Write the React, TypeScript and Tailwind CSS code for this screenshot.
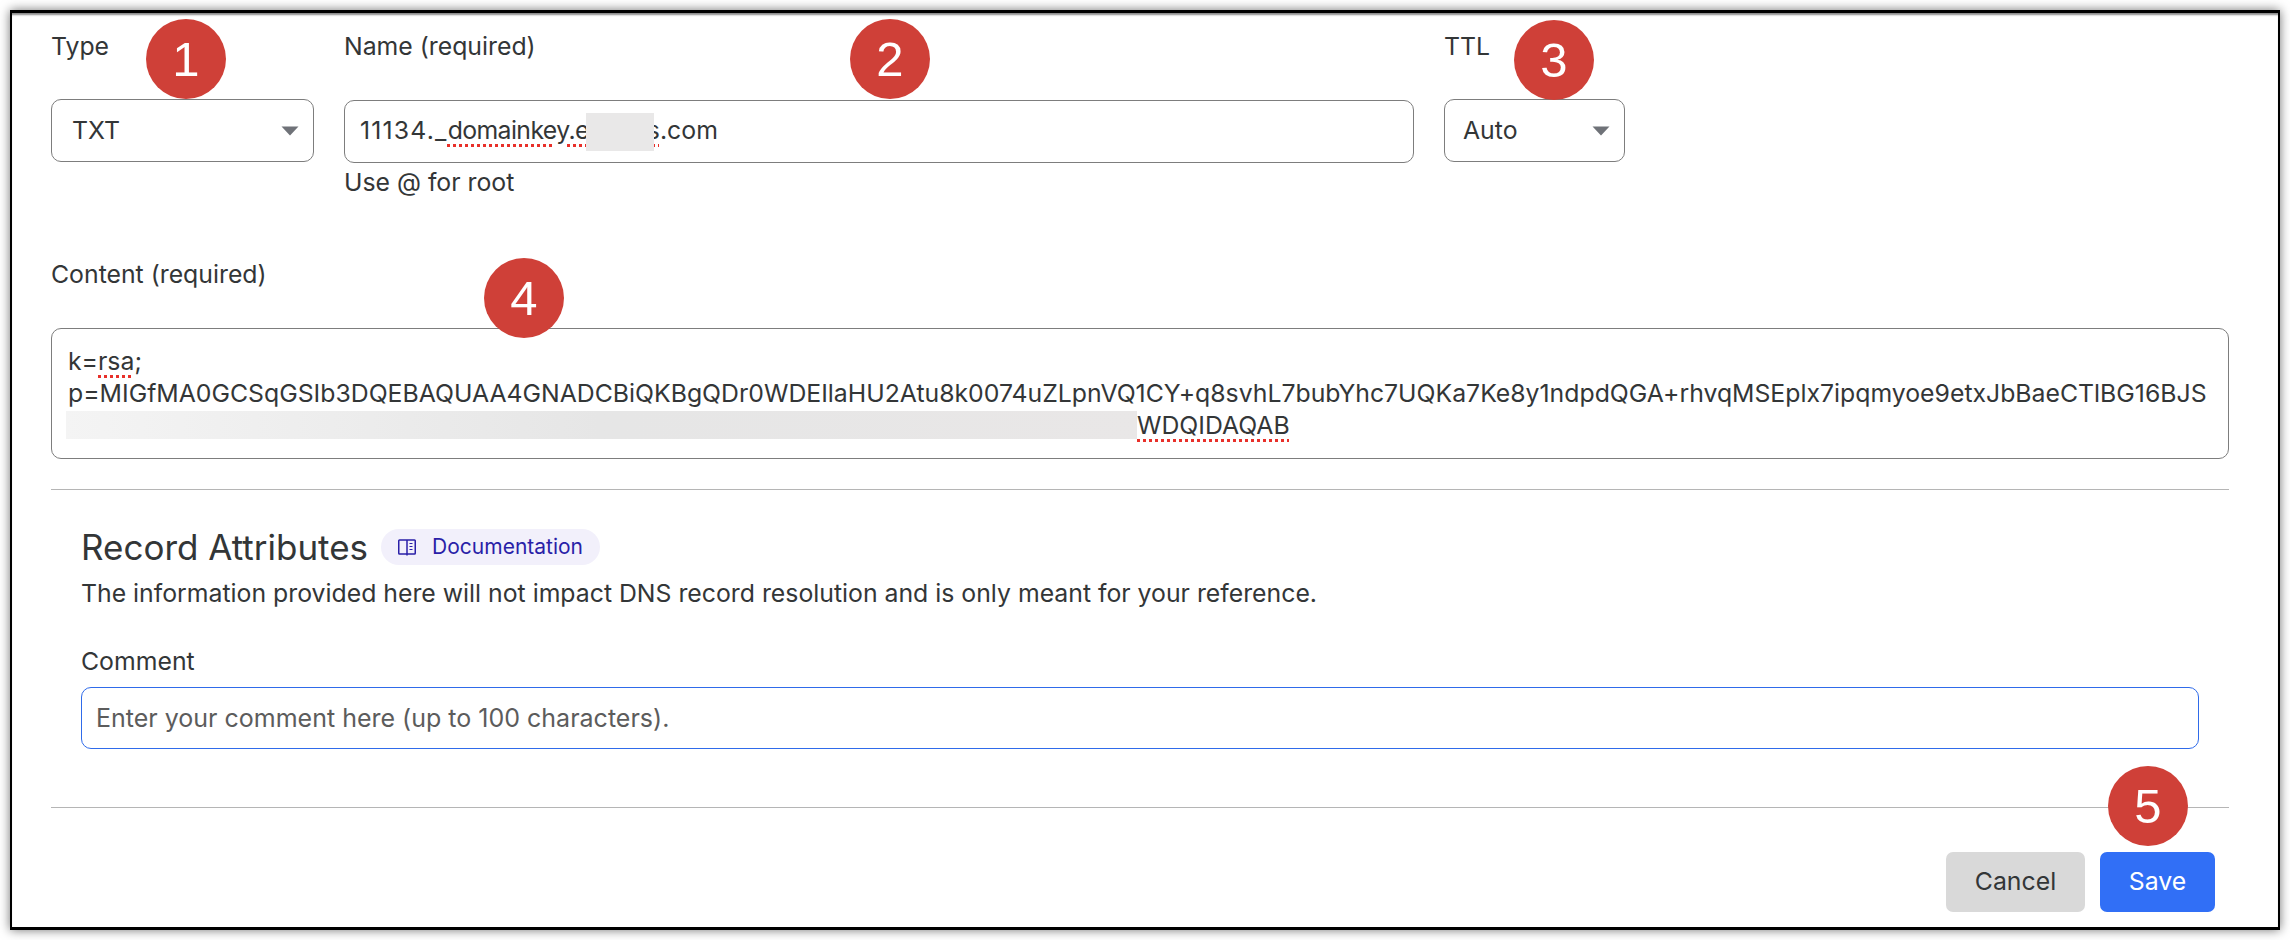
function Caret() {
  return (
    <svg width="18" height="10" viewBox="0 0 18 10" className="shrink-0">
      <path d="M0.5 0.5h17L9 9.5z" fill="#6f7278" />
    </svg>
  )
}

function BookIcon() {
  return (
    <svg width="18" height="20" viewBox="0 0 18 20" fill="none" stroke="currentColor" strokeWidth="1.5" className="shrink-0">
      <path d="M9 3H1.5a.75.75 0 0 0-.75.75v12.5c0 .4.35.75.75.75H9" />
      <path d="M9 3h7.5a.75.75 0 0 1 .75.75v12.5c0 .4-.35.75-.75.75H9" />
      <path d="M9 3v15.5" />
      <path d="M11.5 6.5h3M11.5 9.5h3M11.5 12.5h3" strokeWidth="1.2" />
    </svg>
  )
}

function Step({ n, className }: { n: number; className: string }) {
  return (
    <div
      className={`absolute w-[80px] h-[80px] rounded-full bg-[#cf4038] text-white flex items-center justify-center font-['Liberation_Sans',sans-serif] text-[49px] leading-none ${className}`}
    >
      {n}
    </div>
  )
}

function Squiggle({ children }: { children: React.ReactNode }) {
  return (
    <span className="underline decoration-dotted decoration-[#e8302a] decoration-[3px] underline-offset-[5px]">
      {children}
    </span>
  )
}

export default function App() {
  return (
    <div className="w-[2290px] h-[940px] bg-white p-[10px] font-['Inter',sans-serif] text-[24.8px] text-[#333637] overflow-hidden">
      <div className="relative w-[2270px] h-[920px] bg-white border-t-[3px] border-x-[2px] border-b-[3px] border-black shadow-[0_0_10px_rgba(0,0,0,0.55),inset_0_3px_2px_-1px_#8a8a8a] pl-[39px] pr-[49px]">
        <div className="flex gap-[30px] pt-[20px]">
          <div className="w-[263px]">
            <div className="h-[66px] leading-[26px]">Type</div>
            <div className="h-[63px] border border-[#7d7d7d] rounded-[10px] flex items-center justify-between pl-[20px] pr-[14px]">
              <span>TXT</span>
              <Caret />
            </div>
          </div>
          <div className="w-[1070px]">
            <div className="h-[67px] leading-[26px]">Name (required)</div>
            <div className="h-[63px] border border-[#7d7d7d] rounded-[10px] flex items-center pl-[15px]">
              <span className="whitespace-pre">
                <span className="tracking-[1.2px]">11134._</span>
                <span className="tracking-[-0.6px]">
                  <Squiggle>domainkey.e</Squiggle>
                </span>
                <span className="relative inline-block w-[68px] h-[38px] -ml-[3px] -mr-[7px] align-middle bg-[#e9e8e8]" />
                <Squiggle>s</Squiggle>.com
              </span>
            </div>
            <div className="mt-[6px] leading-[26px]">Use @ for root</div>
          </div>
          <div className="w-[181px]">
            <div className="h-[66px] leading-[26px]">TTL</div>
            <div className="h-[63px] border border-[#7d7d7d] rounded-[10px] flex items-center justify-between pl-[18px] pr-[14px]">
              <span>Auto</span>
              <Caret />
            </div>
          </div>
        </div>

        <div className="mt-[66px] h-[67px] leading-[26px]">Content (required)</div>
        <div className="h-[131px] border border-[#7d7d7d] rounded-[10px] pl-[16px] pt-[16px] leading-[32px] whitespace-nowrap">
          <div>
            k=<Squiggle>rsa</Squiggle>;
          </div>
          <div>p=MIGfMA0GCSqGSIb3DQEBAQUAA4GNADCBiQKBgQDr0WDEIlaHU2Atu8k0074uZLpnVQ1CY+q8svhL7bubYhc7UQKa7Ke8y1ndpdQGA+rhvqMSEplx7ipqmyoe9etxJbBaeCTlBG16BJS</div>
          <div className="flex items-center">
            <span className="w-[1071px] h-[28px] -ml-[2px] bg-gradient-to-r from-[#f4f4f4] via-[#e6e6e6] to-[#e9e7e7]" />
            <Squiggle>WDQIDAQAB</Squiggle>
          </div>
        </div>

        <div className="mt-[30px] border-t border-[#b5b5b5] px-[30px]">
          <div className="flex items-center gap-[13px] mt-[37px]">
            <h2 className="text-[35px] leading-[40px]">Record Attributes</h2>
            <a className="h-[36px] px-[17px] rounded-full bg-[#f2f0fb] text-[#2a1fa8] text-[21px] flex items-center gap-[16px]">
              <BookIcon />
              Documentation
            </a>
          </div>
          <p className="mt-[10px] leading-[32px]">
            The information provided here will not impact DNS record resolution and is only meant for your reference.
          </p>
          <div className="mt-[39px] leading-[26px]">Comment</div>
          <input
            className="mt-[13px] w-full h-[62px] border-[1.5px] border-[#2f6bea] rounded-[10px] px-[14px] text-[25px] outline-none placeholder:text-[#5c5c5c]"
            placeholder="Enter your comment here (up to 100 characters)."
          />
        </div>

        <div className="mt-[58px] border-t border-[#b5b5b5] flex justify-end gap-[15px] pt-[44px] pr-[14px]">
          <button className="w-[139px] h-[60px] rounded-[7px] bg-[#d9d9d9]">Cancel</button>
          <button className="w-[115px] h-[60px] rounded-[7px] bg-[#316ff6] text-white">Save</button>
        </div>

        <Step n={1} className="left-[134px] top-[6px]" />
        <Step n={2} className="left-[838px] top-[6px]" />
        <Step n={3} className="left-[1502px] top-[7px]" />
        <Step n={4} className="left-[472px] top-[245px]" />
        <Step n={5} className="left-[2096px] top-[753px]" />
      </div>
    </div>
  )
}
